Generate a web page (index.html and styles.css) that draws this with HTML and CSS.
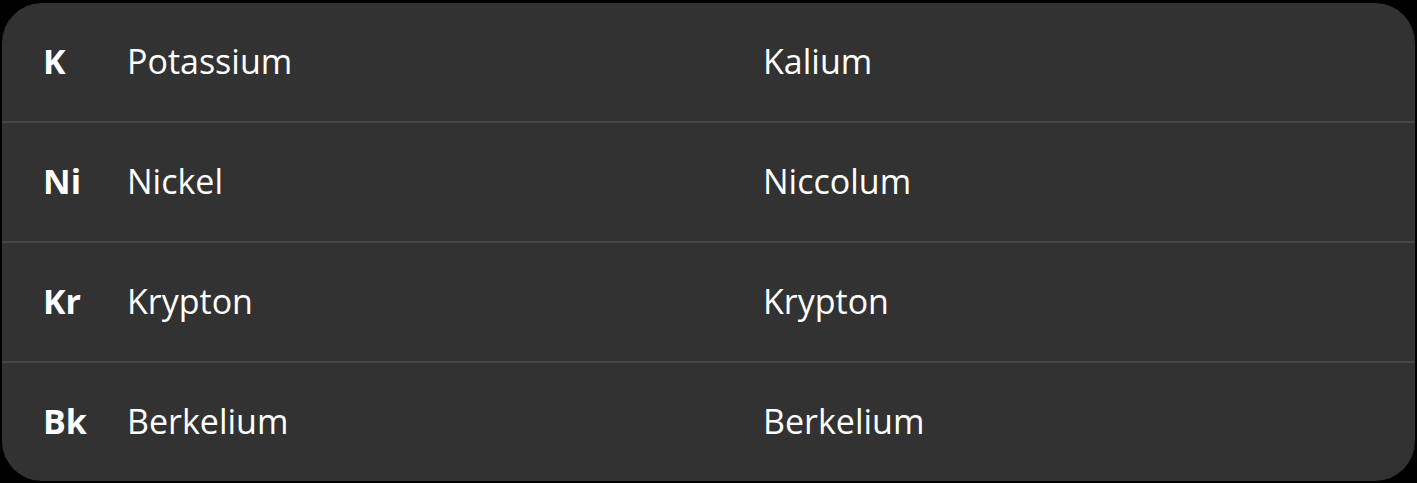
FILE: index.html
```html
<!DOCTYPE html>
<html>
<head>
<meta charset="utf-8">
<link rel="stylesheet" href="styles.css">
</head>
<body>
<div class="card">
  <div class="row"><span class="sym">K</span><span class="name">Potassium</span><span class="latin">Kalium</span></div>
  <div class="row"><span class="sym">Ni</span><span class="name">Nickel</span><span class="latin">Niccolum</span></div>
  <div class="row"><span class="sym">Kr</span><span class="name">Krypton</span><span class="latin">Krypton</span></div>
  <div class="row"><span class="sym">Bk</span><span class="name">Berkelium</span><span class="latin">Berkelium</span></div>
</div>
</body>
</html>
```
FILE: styles.css
```css
html, body {
  margin: 0;
  background: #000;
}
body {
  padding: 3px 2px 2px 2px;
  font-family: "Open Sans", sans-serif;
}
.card {
  background: #323232;
  border-radius: 40px;
  height: 478px;
  display: flex;
  flex-direction: column;
  overflow: hidden;
}
.row {
  height: 116px;
  padding-bottom: 2px;
  box-sizing: content-box;
  display: flex;
  align-items: center;
  color: #fff;
  font-size: 34px;
  border-bottom: 2px solid #474747;
}
.row:last-child {
  border-bottom: none;
}
.sym {
  width: 84px;
  padding-left: 41px;
  font-weight: 700;
}
.name {
  width: 636px;
}
.latin {
  flex: 1;
}
```
